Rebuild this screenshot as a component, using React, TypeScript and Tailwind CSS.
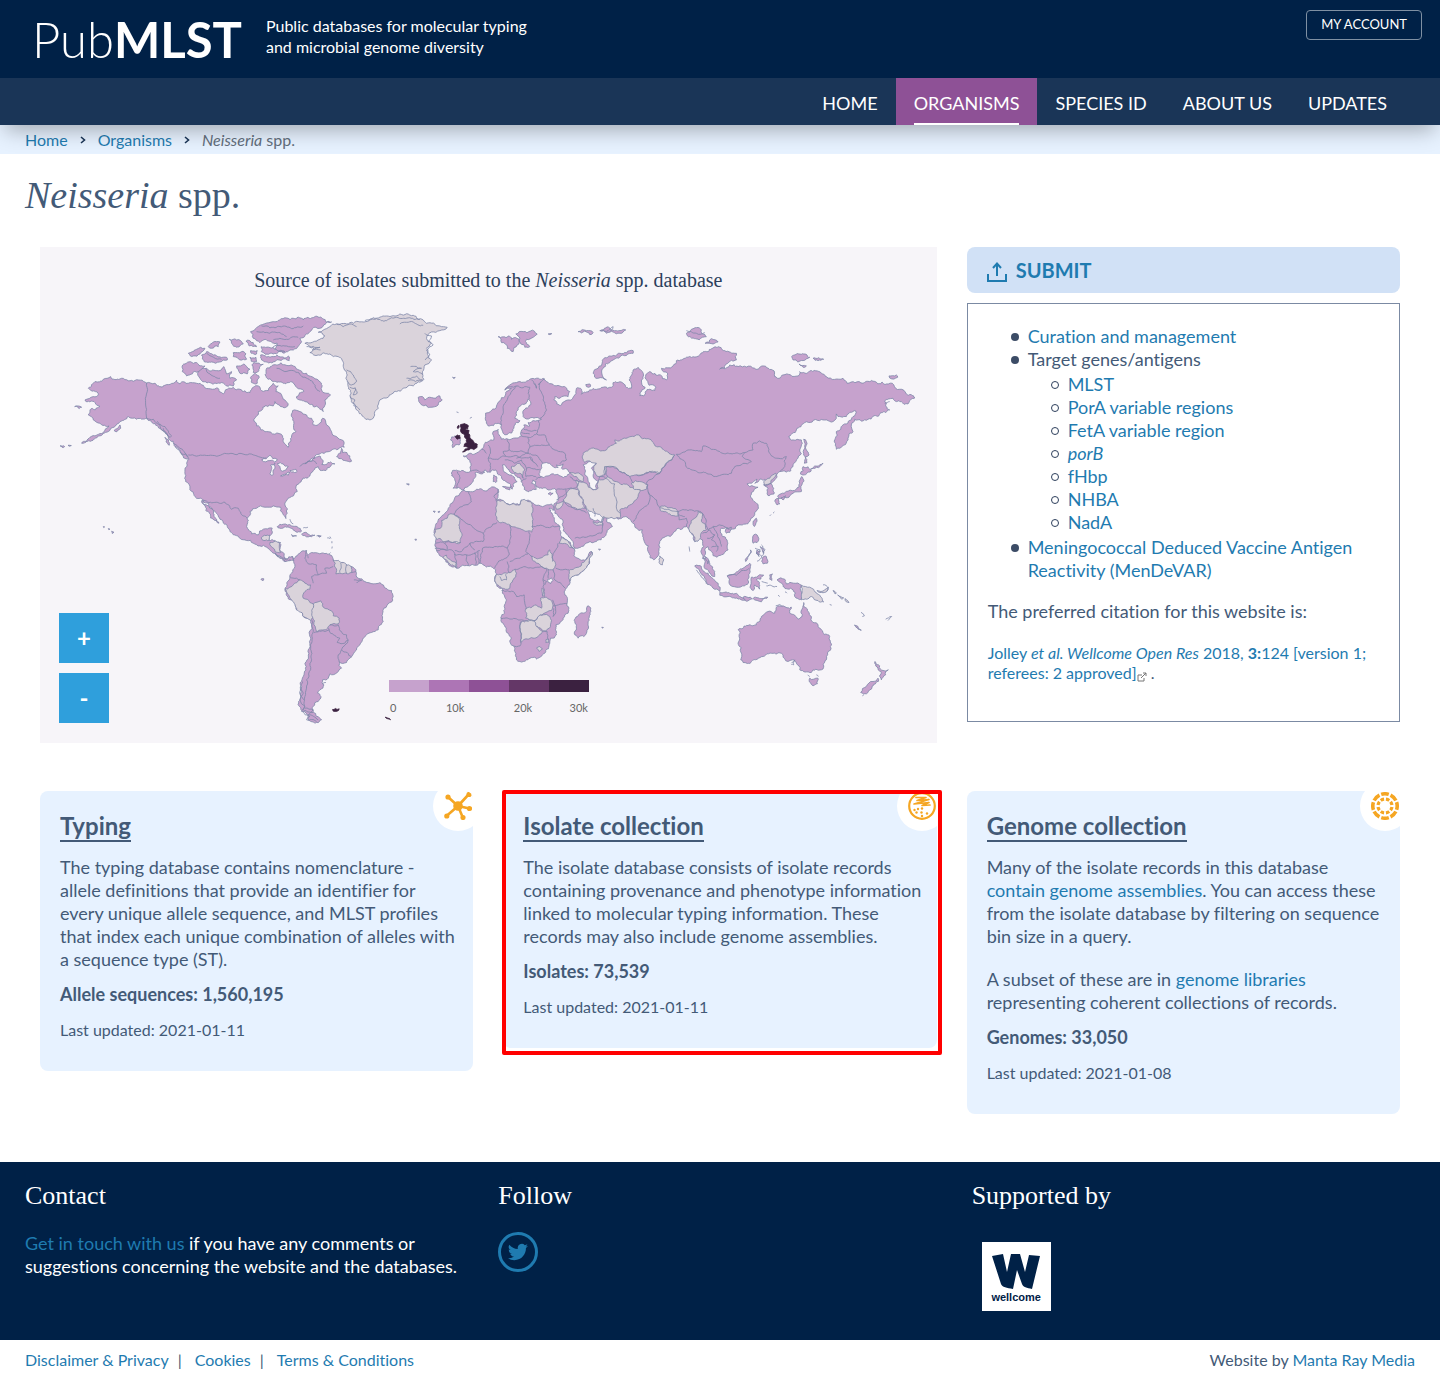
import React from "react";

type Point = [number, number];

const parse = (s: string): Point[] =>
  s.trim().split(/\s+/).map((p) => p.split(",").map(Number) as Point);

const noise = (x: number, y: number) => {
  const v = Math.sin(x * 12.9898 + y * 78.233) * 43758.5453;
  return (v - Math.floor(v)) * 2 - 1;
};

/* Splits an edge at displaced midpoints, so that a coast looks natural. */
function split(a: Point, b: Point, k: number): Point[] {
  const len = Math.hypot(b[0] - a[0], b[1] - a[1]);
  if (len < 7) return [b];
  const mx = (a[0] + b[0]) / 2;
  const my = (a[1] + b[1]) / 2;
  const d = (noise(mx, my) * Math.min(len, 26) * k) / len;
  const sign = a[0] < b[0] ? 1 : -1;
  const m: Point = [mx - (b[1] - a[1]) * d * sign, my + (b[0] - a[0]) * d * sign];
  return [...split(a, m, k), ...split(m, b, k)];
}

function trace(s: string, closed: boolean, k: number) {
  const pts = parse(s);
  const out: Point[] = [pts[0]];
  for (let i = 1; i < pts.length; i++) out.push(...split(pts[i - 1], pts[i], k));
  if (closed) out.push(...split(pts[pts.length - 1], pts[0], k));
  return "M" + out.map((p) => p[0].toFixed(1) + " " + p[1].toFixed(1)).join("L") + (closed ? "Z" : "");
}

interface Region {
  x: number;
  y: number;
  land?: string[];
  water?: string[];
  none?: string[];
  dark?: string[];
  lines?: string[];
}

const regions: Region[] = [
  {
    x: 0,
    y: 53,
    land: [
      "212,230 240,237 280,244 320,249 345,250 352,258 380,254 400,250 410,241 420,252 445,250 470,250 490,256 505,266 530,264 550,282 562,268 580,262 600,268 630,278 640,262 655,258 665,272 685,272 700,250 715,258 708,275 725,285 735,300 745,312 738,322 718,315 705,305 700,318 675,318 655,335 642,358 650,378 680,395 705,403 728,408 730,425 745,442 752,425 755,408 768,395 762,370 755,350 758,332 780,335 800,345 815,355 820,375 835,374 848,355 860,375 875,395 890,410 910,422 913,442 895,448 860,456 830,464 812,478 795,492 815,484 842,470 850,482 846,494 860,494 872,486 885,492 868,503 845,512 835,500 820,512 810,528 785,540 770,555 772,575 755,590 738,605 735,615 742,640 738,656 728,640 722,622 700,618 675,622 650,625 630,635 622,655 620,680 635,702 655,705 670,688 697,685 692,705 688,722 720,728 722,755 735,775 758,770 766,780 752,782 735,785 712,768 695,755 680,742 660,738 640,730 620,722 600,715 570,695 562,680 540,658 522,632 505,610 490,602 465,590 450,565 437,545 435,510 440,490 445,478 425,462 405,440 385,415 365,390 345,370 320,355 290,358 265,350 240,365 222,382 205,395 175,408 125,430 150,412 190,398 207,378 180,370 160,360 145,345 150,330 180,320 165,308 135,300 160,290 175,285 145,265 165,245 190,238",
      "486,602 505,618 520,640 537,670 525,662 508,640 496,618",
      "650,83 700,65 760,55 820,53 875,66 850,78 810,95 780,115 785,125 755,150 720,155 700,150 712,130 660,128 640,115 632,95",
      "662,165 700,170 745,168 748,182 700,186 665,180",
      "475,215 500,205 530,212 552,200 560,222 575,215 570,235 590,240 580,258 540,250 510,248 480,235",
      "435,192 470,188 495,198 475,215 440,228 427,215",
      "680,205 710,195 760,198 800,220 835,240 845,270 872,285 855,300 850,335 820,320 795,305 770,290 792,274 770,262 760,248 730,250 700,245 685,238 675,225",
      "485,165 500,155 520,165 560,172 562,180 515,186 488,178",
      "445,160 470,148 495,145 480,162 460,168",
      "505,140 520,126 540,126 535,140 515,145",
      "568,118 590,120 610,132 600,138 575,130",
      "580,158 605,155 618,162 620,178 600,180 580,170",
      "590,198 612,192 630,208 622,222 600,220",
      "636,195 670,193 655,215 640,218",
      "632,232 645,220 658,232 652,250 635,248",
      "618,124 640,128 650,140 628,138",
      "632,152 652,152 650,162 634,160",
      "630,172 648,172 650,185 634,184",
      "664,140 700,142 735,155 700,162 664,155",
      "890,470 905,445 908,458 930,468 935,484 915,482 905,476",
      "222,392 240,375 242,385 228,396",
      "104,320 125,322 118,326",
      "712,680 730,673 755,678 785,694 768,696 740,682",
      "785,703 800,698 825,706 805,711",
      "60,438 74,440 66,442", "84,436 94,437 88,439",
      "215,694 222,697 217,701", "205,686 210,688 206,689", "190,680 194,681 191,683",
      "375,412 386,420 388,436 378,426",
    ],
    water: [
      "665,480 690,466 712,478 704,486 690,482 678,486",
      "692,496 705,490 700,510 698,526 690,522",
      "712,492 730,492 745,500 738,510 728,514 720,500",
      "722,528 740,520 750,518 745,526", "750,512 768,508 772,514 755,517",
    ],
    none: ["664,714 674,706 690,706 686,722 672,722", "690,728 722,728 722,758 705,755 694,740"],
    lines: [
      "320,249 320,355 340,358 360,375 385,410",
      "445,465 640,465 655,470 680,474", "780,500 800,488 820,482 830,492",
      "486,602 520,608 555,607 575,628 595,625 610,648 622,655",
      "352,364 375,380 395,408 388,412 370,385", "400,430 420,445 440,465 448,478", "405,440 425,462 445,470",
      "665,78 690,84 720,80 755,86 790,78", "650,95 690,100 720,98 740,110", "700,120 740,118 775,112", "700,140 740,138 765,140",
      "710,205 735,215 760,212 790,232 820,250 840,275", "496,205 510,222 540,235", "500,160 545,178",
      "760,672 750,658", "790,684 804,682", "830,708 842,709", "862,714 870,716",
    ],
  },
  {
    x: 600,
    y: 53,
    none: [
      "195,130 240,118 255,108 235,97 250,90 290,72 330,68 370,66 400,53 440,48 480,42 520,46 550,60 560,70 600,78 622,82 600,92 575,96 560,115 575,130 560,145 575,180 555,195 548,215 552,238 520,258 490,265 470,275 445,292 420,300 415,325 405,335 400,355 390,360 370,350 350,330 340,310 330,285 325,260 318,235 322,225 310,195 295,170 270,162 235,165 210,158 222,145",
    ],
    land: [
      "535,292 548,290 555,300 575,293 600,288 607,300 595,315 570,322 545,315 537,305",
      "500,552 508,552 506,556", "638,232 646,232 643,236",
    ],
    lines: [
      "200,140 240,142 220,150 242,150", "290,72 310,80 330,72 350,80", "375,62 410,56 440,62 470,52 540,58", "480,72 520,66 550,76",
      "320,210 340,225 350,245 335,255 322,245", "330,262 348,268 340,285 352,280 345,262", "555,100 575,108 565,125 580,135 560,150 570,165 556,180",
      "512,200 545,205 520,215 550,222", "500,235 530,228 548,240 505,242", "330,290 345,300 342,318 360,330",
    ],
  },
  {
    x: 1140,
    y: 53,
    land: [
      "100,565 105,540 98,512 130,512 152,514 153,490 130,468 150,460 165,462 185,448 205,425 222,420 220,395 235,388 238,405 245,418 265,418 305,408 312,385 312,375 330,378 325,368 340,362 365,358 320,357 310,350 312,330 332,305 325,297 305,315 290,335 285,355 300,362 282,385 262,404 250,400 245,375 235,370 205,378 197,360 197,340 230,318 255,290 275,265 255,270 290,248 330,238 370,235 380,245 420,258 450,275 445,290 405,290 402,300 425,315 445,300 465,285 470,265 485,268 485,283 510,270 550,262 575,262 580,248 610,250 635,265 628,240 640,210 655,202 668,215 665,240 676,262 660,287 672,288 690,268 705,272 708,262 688,256 678,225 690,215 722,225 740,240 744,222 725,205 760,198 770,182 800,172 840,165 865,155 890,142 915,152 950,160 950,180 900,208 930,195 955,200 1005,205 1030,198 1058,210 1065,230 1078,235 1090,225 1135,228 1140,215 1170,213 1205,220 1220,230 1270,235 1282,250 1330,250 1350,245 1400,252 1440,268 1460,282 1486,293 1465,312 1445,305 1420,295 1395,305 1410,330 1360,350 1345,358 1305,358 1295,375 1300,395 1285,415 1260,445 1250,448 1247,415 1250,395 1270,375 1300,350 1308,333 1280,350 1250,342 1240,365 1200,362 1155,368 1130,390 1107,410 1120,420 1145,420 1145,460 1120,500 1100,517 1080,515 1070,525 1065,540 1050,550 1062,565 1063,582 1045,587 1045,565 1032,555 1035,538 1020,538 1005,550 1012,538 982,552 990,560 1015,562 995,578 1010,610 1012,630 990,665 960,675 930,688 905,685 902,695 922,720 925,750 905,765 892,772 875,755 865,740 855,750 850,775 870,790 885,815 885,830 870,820 855,790 845,760 848,720 840,715 825,725 810,695 800,680 775,685 760,700 720,725 718,760 702,780 688,760 672,720 668,690 650,685 640,670 625,655 595,658 565,655 550,638 520,625 498,618 505,635 520,660 545,668 555,645 560,665 578,680 555,710 530,725 465,745 455,720 430,680 405,640 412,605 410,570 385,570 350,562 348,545 340,540 335,550 350,568 335,572 325,576 308,555 305,540 285,520 262,505 248,495 250,505 268,525 292,545 282,550 277,568 268,550 245,530 228,510 212,517 195,510 185,522 165,520 160,545 145,560 128,570",
      "235,110 265,108 275,118 298,118 292,135 280,155 262,145 245,128",
      "288,102 310,95 352,102 340,112 320,118 330,140 315,142 300,115",
      "520,220 535,205 548,185 570,168 600,160 640,152 640,160 600,172 570,188 550,205 548,228 560,240 535,235",
      "475,95 500,92 520,98 510,104", "540,92 570,84 590,92 618,90 600,100 560,100",
      "800,100 815,88 845,90 860,110 838,120 810,110", "856,130 875,116 895,126 880,132", "385,102 396,101 390,104",
      "498,254 510,252 512,260 500,260",
      "92,420 105,408 118,415 118,435 98,443", "222,525 230,530 228,548 220,545", "248,560 275,560 270,570",
      "1116,170 1145,163 1170,172 1150,182 1120,180", "1180,175 1212,178 1195,182", "1408,228 1430,225 1434,232 1410,234", "1138,192 1160,198 1150,202",
      "1152,418 1160,425 1160,450 1168,465 1158,470 1162,488 1154,490 1152,450",
      "1150,500 1175,512 1158,524 1142,522", "1146,530 1152,545 1145,575 1120,580 1110,588 1080,596 1074,590 1105,574 1130,568 1140,550",
      "1066,600 1078,596 1080,612 1072,615", "1098,588 1084,594 1090,600",
      "1000,668 1010,655 1012,665 1004,680", "918,688 935,682 930,698 920,700", "385,582 400,580 392,586",
      "1172,508 1210,490 1190,502",
    ],
    water: [
      "358,525 365,495 385,490 400,500 415,503 410,495 430,492 425,505 450,520 440,530 405,525 385,528 370,533",
      "490,495 510,485 530,490 515,505 520,525 535,545 530,565 510,565 505,545 495,525",
    ],
    none: [
      "490,460 515,445 560,450 590,430 585,420 650,405 690,418 710,440 765,465 740,490 720,520 690,515 650,525 630,530 600,515 580,500 560,500 555,525 535,530 522,512 530,490 510,483 495,488",
      "470,540 500,550 506,562 520,570 535,565 536,542 550,540 565,530 600,550 630,562 660,568 655,590 640,610 600,630 600,655 565,655 545,650 515,635 498,618 490,600 475,570",
      "440,580 458,566 478,572 490,600 498,625 480,628 435,608 430,600", "635,550 660,545 685,555 680,568 640,565",
      "450,518 490,530 490,545 470,530", "275,500 300,490 315,510 310,535 300,520 285,518", "410,610 432,602 425,620 410,628",
      "720,622 735,618 775,635 775,648 750,642 722,632", "810,675 825,655 835,635 848,640 845,660 860,690 845,698 840,718 825,725 810,695",
      "720,768 732,780 728,795 718,788", "1032,545 1050,535 1068,520 1062,535 1050,552 1036,556", "520,665 545,668 553,650 550,676 530,676",
    ],
    dark: [
      "122,374 138,373 146,378 144,386 136,390 148,392 146,400 150,412 158,420 164,430 173,434 172,442 162,449 148,450 136,454 128,456 136,447 146,444 132,440 134,432 142,428 140,418 134,412 132,402 126,400 122,390", "106,410 112,405 120,407 122,415 112,418", "114,378 117,376 115,386 112,384",
    ],
    lines: [
      "255,270 290,258 330,262 325,280 328,297", "345,250 350,265 335,240", "290,258 265,290 250,320 245,375", "365,245 360,270 370,300 380,330 360,355", "375,236 355,255",
      "355,362 358,380 350,402 375,405 388,435 330,442 325,412 350,402", "388,435 435,460 440,480 420,492", "305,408 325,412", "305,398 330,402", "312,388 350,392",
      "262,418 268,450 250,455 260,470 230,478 205,475 212,460 205,435", "268,450 295,455 325,460 330,442", "262,470 300,472 325,460 355,470 368,490", "205,475 212,490 210,515", "255,480 285,490 305,480",
      "305,480 320,505 360,508", "320,505 318,530 350,532", "112,515 118,540 112,565", "153,514 195,518", "330,470 340,485", "348,540 365,530", "305,545 320,535", "185,448 200,460", "290,475 330,472 355,500",
      "450,530 478,545 470,562 410,570", "410,600 440,580 438,568", "435,608 480,628 500,640", "465,715 500,712 545,700 550,670", "525,650 520,625",
      "536,542 540,530 585,552 583,570 590,600 590,625 600,640", "555,525 555,500 580,500 600,515 630,530 640,550", "650,525 690,515 720,520 700,535 680,550", "565,530 555,500",
      "770,463 810,450 845,455 850,438 900,455 960,462 975,458 1000,450 1000,430 1020,423 1040,430 1050,460 1075,475 1100,470 1095,500 1080,515",
      "770,463 795,485 800,502 835,518 895,528 935,520 945,500 995,485 968,470 975,458", "765,465 740,490 720,520",
      "680,550 685,575 710,600 720,622 775,635 815,630 835,633", "685,575 690,600 655,640 640,665", "775,635 778,660 800,655 800,680", "778,645 795,650",
      "835,633 848,640 865,690 900,675 930,688", "848,700 870,690 885,705 875,720 895,740 890,755", "880,680 900,720 905,740", "862,715 885,705", "875,742 895,740",
      "1032,555 1055,550", "1410,305 1395,310", "110,336 116,338", "150,355 156,352", "545,90 565,92 580,80 570,95", "800,92 830,100 855,98",
    ],
  },
  {
    x: 1140,
    y: 593,
    land: [
      "122,38 145,35 170,28 210,25 235,28 235,45 230,60 250,62 270,75 300,75 305,60 335,68 380,75 395,72 400,92 388,85 400,110 420,140 425,170 440,180 455,200 465,210 462,228 490,240 515,215 518,222 505,255 480,280 450,305 437,328 435,345 442,370 445,400 430,415 408,435 410,465 392,475 390,490 375,520 350,538 320,540 300,545 290,540 285,515 272,490 265,460 250,430 243,412 255,385 258,365 248,340 245,325 225,305 230,285 228,270 200,262 180,250 150,258 110,265 85,250 65,230 50,210 45,195 50,170 45,145 60,115 75,100 90,80 100,65",
      "505,378 513,395 505,430 492,470 475,475 465,465 470,445 467,415 490,400",
      "40,94 46,94 44,98", "54,96 60,94 58,98", "546,442 551,443 548,445", "536,208 542,208 540,211",
    ],
    none: [
      "232,62 250,62 270,75 300,75 305,60 335,68 336,157 270,135 235,125 230,95",
      "45,148 62,145 65,122 82,115 85,105 102,103 120,118 122,188 75,185 50,178",
      "515,215 518,222 505,255 480,280 450,305 448,272 480,260 498,240",
      "333,228 360,235 385,225 390,210 397,228 408,255 400,270 380,265 350,250", "418,190 425,172 440,180 465,208 440,192",
      "228,285 260,280 285,268 290,280 280,300 270,325 245,325 225,303", "70,232 80,226 90,238 110,250 110,265 85,248",
      "318,388 345,375 365,385 362,355 380,352 398,370 395,392 370,402 345,422 318,415",
      "342,425 370,405 390,410 392,435 380,452 350,440", "305,425 340,422 350,440 368,455 345,475 325,478 303,488",
      "350,505 360,500 368,507 358,515", "378,480 386,478 386,488 378,488", "366,325 372,330 374,350 368,345",
    ],
    water: ["384,298 395,294 400,302 392,312 384,306"],
    lines: [
      "235,28 222,50 230,65", "145,35 155,65 110,90 102,103", "102,103 190,160 232,128", "190,160 190,185 150,190 125,215 105,212", "122,188 75,190 82,210",
      "270,135 272,175 262,205 230,200 188,205 180,250", "327,155 328,190 318,215 333,228", "336,140 420,140", "262,205 268,225 245,240 225,265", "270,245 300,235 325,222",
      "285,268 320,262 380,266", "262,245 268,280", "380,268 370,295 370,320 368,350", "245,332 280,335 290,350 313,345 318,388", "243,415 305,420 345,422",
      "303,425 301,498 280,498", "408,265 448,270", "400,270 402,295 437,325", "400,378 442,372", "415,190 400,220 398,245", "105,222 108,262", "140,225 145,258", "165,218 168,255", "175,215 178,250",
      "45,205 95,210 105,225 140,225 180,212", "48,190 75,190", "50,212 80,212", "258,283 260,300 245,302 240,290", "370,300 380,305 375,315", "398,360 408,395 400,410 402,385", "368,455 382,455 386,480", "150,190 165,210", "385,268 385,295",
    ],
  },
  {
    x: 1800,
    y: 653,
    land: [
      "295,390 350,375 365,350 385,335 405,340 410,322 430,318 455,322 450,340 475,358 487,350 492,308 505,335 515,350 520,368 545,390 570,410 572,440 560,480 545,510 515,518 480,510 470,490 458,480 445,485 430,465 405,460 370,470 335,485 310,488 303,480 305,460 295,430",
      "510,535 535,535 533,552 520,558 512,548",
      "706,485 720,498 730,512 746,510 738,525 725,540 720,530 724,515", "715,535 716,545 695,568 680,582 663,578 680,560 700,545",
      "165,198 185,200 205,220 235,250 240,275 220,265 195,235 180,215", "240,278 270,280 300,290 330,293 300,297 265,290 240,286",
      "262,228 285,222 310,205 330,190 328,230 315,258 290,262 268,250", "335,232 350,232 372,226 350,240 360,268 345,255 340,272 332,258",
      "412,240 435,238 440,252 462,250 485,256 485,298 465,290 460,270 430,260", "342,105 352,105 352,128 340,130", "368,175 380,170 383,190 370,192", "352,150 362,155 358,170",
      "362,140 370,145 372,160", "340,296 356,294 384,292 365,306", "644,376 655,380 665,391 655,388", "390,225 398,222 396,242 390,238",
      "332,150 322,180 318,185", "196,170 206,180 204,192", "310,292 332,292 338,297 312,297",
    ],
    none: ["485,256 510,262 530,280 548,300 552,306 535,302 515,290 500,298 485,300", "532,272 555,270 566,262 560,276 540,278", "580,272 590,280 586,282", "594,285 612,294 606,298", "616,296 628,308 620,306"],
    lines: [
      "265,228 290,226 305,212 328,205", "550,255 566,264 562,274", "346,145 362,150 350,160 366,168 352,184", "365,135 376,150 368,168", "366,245 384,250", "380,258 412,260",
      "170,210 185,232 200,252", "664,338 674,348 668,350", "738,358 756,350 745,362", "455,490 465,480 462,495 455,494", "408,318 420,314 428,320", "148,140 150,155", "504,525 510,530", "530,525 536,530", "390,48 394,44", "400,40 404,36", "668,588 672,586", "415,286 420,290", "436,276 442,280", "570,314 576,316",
    ],
  },
  {
    x: 630,
    y: 743,
    land: [
      "128,90 150,70 170,62 175,75 185,68 210,72 240,75 250,92 280,98 305,110 318,125 325,145 345,155 370,162 400,165 425,182 430,200 420,218 402,235 398,265 385,300 365,308 340,325 330,345 315,365 300,385 290,398 268,395 275,415 262,428 240,432 235,445 218,450 222,465 210,480 203,490 213,500 205,515 190,530 190,545 215,570 200,578 175,568 158,545 146,515 152,480 160,440 165,400 175,360 180,320 183,272 160,260 140,240 125,210 105,180 110,170 118,150 125,130 135,110",
      "75,70 95,82 110,90 128,80 132,92 118,90 105,95 88,84", "125,14 140,18 128,20", "204,18 214,18 210,22", "33,148 42,147 40,152", "495,28 500,28 498,32",
    ],
    none: [
      "120,172 130,165 150,150 165,160 182,165 180,178 165,185 160,205 180,218 190,222 190,262 183,272 160,260 140,240 125,210 105,178",
      "190,222 213,213 220,232 245,243 250,258 268,265 265,282 240,285 230,298 200,305 192,285 188,262", "250,90 280,98 305,110 305,128 270,130 258,132 255,112",
    ],
    dark: ["248,539 256,536 268,537 266,542 256,545 250,544", "406,562 414,565 422,570 414,567"],
    lines: [
      "170,62 165,85 175,102 200,105 205,135 185,140 190,160", "205,135 230,130 225,115 250,110", "120,140 140,145 150,150", "272,100 270,128", "290,104 290,130",
      "188,272 190,300 185,340 180,400 170,450 165,500 160,540 190,548", "192,308 225,305 238,300", "240,285 265,285 268,300 290,315 295,330 285,340 262,338 270,325 240,308 236,295",
      "268,395 265,375 275,360 305,382", "295,330 275,360", "305,128 318,125", "312,150 335,152 320,158", "152,470 160,490 150,510 165,530 155,545 180,560 170,570 200,575", "158,455 150,485 162,510", "165,535 190,540 175,555 205,570", "240,20 243,26", "246,34 246,40", "247,50 246,56", "242,68 238,72", "218,462 228,458", "170,75 175,85",
    ],
  },
];

function WorldMap() {
  return (
    <svg viewBox="0 0 2691 1488" className="block w-full" role="img" aria-label="World map of isolate sources" strokeLinejoin="round">
      {regions.map((r, i) => (
        <g key={i} transform={`translate(${r.x} ${r.y + 106})`} stroke="#7d87a8" strokeWidth="2.4">
          {r.land?.map((s, k) => <path key={k} d={trace(s, true, 0.24)} fill="#c6a2cd" />)}
          {r.water?.map((s, k) => <path key={k} d={trace(s, true, 0.24)} fill="#f7f5f9" />)}
          {r.none?.map((s, k) => <path key={k} d={trace(s, true, 0.2)} fill="#dad3db" />)}
          {r.dark?.map((s, k) => <path key={k} d={trace(s, true, 0.24)} fill="#3b2140" stroke="#3b2140" />)}
          {r.lines?.map((s, k) => <path key={k} d={trace(s, false, 0.16)} fill="none" />)}
        </g>
      ))}
    </svg>
  );
}

const link = "text-[#1f7bb0] hover:underline";

function NodesIcon() {
  return (
    <svg viewBox="0 0 28 28" className="size-7" stroke="#f5a623" strokeWidth="2.6" strokeLinecap="round" fill="#f5a623">
      <path d="M14 14 4 5M14 14 25 2M14 14 25.500 16.500M14 14 19 26M14 14 2.500 24" />
      <circle cx="14" cy="14" r="3.500" /><circle cx="4" cy="5" r="1.300" /><circle cx="25" cy="2.500" r="1.300" /><circle cx="25.500" cy="16.500" r="1.300" /><circle cx="19" cy="25.500" r="1.300" /><circle cx="2.800" cy="24" r="1.300" />
    </svg>
  );
}

function DishIcon() {
  return (
    <svg viewBox="0 0 28 28" className="size-7" fill="none" stroke="#f5a623">
      <circle cx="14" cy="14" r="12.800" strokeWidth="2.200" />
      <path d="M8 5.500H18L9 8.500 21 7.500 6 12 21 10.500 14 13.500 22 13" strokeWidth="1.700" strokeLinejoin="round" strokeLinecap="round" />
      <g fill="#f5a623" stroke="none"><circle cx="6.500" cy="18" r="1.200" /><circle cx="10" cy="17" r="1.200" /><circle cx="14" cy="16.500" r="1.200" /><circle cx="8.500" cy="20.500" r="1.200" /><circle cx="13.500" cy="20.500" r="1.200" /><circle cx="19" cy="21.500" r="1.200" /><circle cx="14" cy="24" r="1.200" /></g>
    </svg>
  );
}

function RingsIcon() {
  return (
    <svg viewBox="0 0 28 28" className="size-7" fill="none" stroke="#f5a623">
      <circle cx="14" cy="14" r="12.200" strokeWidth="3.600" pathLength="80" strokeDasharray="8 2" strokeDashoffset="-1" transform="rotate(-22.500 14 14)" />
      <circle cx="14" cy="14" r="7" strokeWidth="3.200" pathLength="80" strokeDasharray="6.500 3.500" strokeDashoffset="-1.750" />
    </svg>
  );
}

function Card({ title, icon, marked, children }: { title: string; icon: React.ReactNode; marked?: boolean; children: React.ReactNode }) {
  return (
    <section className="relative">
      <div className="relative overflow-hidden rounded-lg bg-[#e7f2ff] pt-5 pr-3 pb-[30px] pl-5 text-lg leading-[23px] text-[#435a77]">
        <span className="absolute -top-2.5 -right-2.5 flex size-[50px] items-center justify-center rounded-full bg-white">{icon}</span>
        <h2 className="mb-[14px] text-2xl leading-[29px] font-bold">
          <a href="#" className="inline-block border-b-2 border-[#435a77]">{title}</a>
        </h2>
        {children}
      </div>
      {marked && <div className="pointer-events-none absolute -top-px -right-[5px] -bottom-[7px] -left-px rounded-xs border-4 border-[#ff0000]" />}
    </section>
  );
}

function Stats({ label, date }: { label: string; date: string }) {
  return (
    <>
      <p className="mt-3 font-bold">{label}</p>
      <p className="mt-3 text-base leading-[23px]">Last updated: {date}</p>
    </>
  );
}

const nav = ["HOME", "ORGANISMS", "SPECIES ID", "ABOUT US", "UPDATES"];
const serif = "font-['Liberation_Serif',serif]";

export default function App() {
  return (
    <div className="min-w-[1200px] bg-white font-['Lato',sans-serif] text-[#435a77] [font-variant-ligatures:none]">
      <header className="relative z-10 shadow-[0_10px_20px_-5px_rgba(0,0,0,0.3)]">
        <div className="flex h-[78px] items-start bg-[#002147] text-white">
          <a href="#" className="ml-8 pt-[10px] text-[49px] leading-[58px] font-light">Pub<strong className="font-bold">MLST</strong></a>
          <p className="ml-6 pt-[15px] text-base leading-[21px]">Public databases for molecular typing<br />and microbial genome diversity</p>
          <button className="mt-[10px] mr-[18px] ml-auto h-[30px] rounded-[4px] border border-[#7f90a3] px-[14px] text-[13px]">MY ACCOUNT</button>
        </div>
        <nav className="flex h-[47px] justify-end bg-[#1a3557] pr-[35px] text-lg leading-[26px] text-white">
          {nav.map((n) => (
            <a key={n} href="#" className={n === "ORGANISMS" ? "bg-[#8e5196] px-[18px]" : "px-[18px]"}>
              <span className={n === "ORGANISMS" ? "block h-[47px] border-b-2 border-white pt-3" : "block h-[47px] pt-3"}>{n}</span>
            </a>
          ))}
        </nav>
      </header>

      <nav aria-label="Breadcrumb" className="flex h-[29px] items-center gap-[11px] bg-[#e7f2ff] px-[25px] text-base">
        <a href="#" className={link}>Home</a>
        <Chevron />
        <a href="#" className={link}>Organisms</a>
        <Chevron />
        <span className="text-[#626e7c]"><i>Neisseria</i> spp.</span>
      </nav>

      <h1 className={`${serif} px-[25px] pt-[19px] text-[38px] leading-[44px]`}><i>Neisseria</i> spp.</h1>

      <main className="grid grid-cols-3 items-start gap-x-[30px] gap-y-12 px-10 pt-[30px] pb-12">
        <section className="relative col-span-2 bg-[#f7f5f9]">
          <h2 className={`${serif} absolute inset-x-0 top-5 text-center text-xl leading-[26px] text-[#2d3f5c]`}>Source of isolates submitted to the <i>Neisseria</i> spp. database</h2>
          <WorldMap />
          <div className="absolute bottom-5 left-[19px] flex flex-col gap-[10px] text-2xl font-bold text-white">
            <button aria-label="Zoom in" className="size-[50px] bg-[#2f9fdc]">+</button>
            <button aria-label="Zoom out" className="size-[50px] bg-[#2f9fdc]">-</button>
          </div>
          <div className="absolute bottom-7 left-[349px] w-[200px]">
            <div className="flex h-3">
              <span className="flex-1 bg-[#c6a2cd]" /><span className="flex-1 bg-[#ad75b5]" /><span className="flex-1 bg-[#8e5196]" /><span className="flex-1 bg-[#643767]" /><span className="flex-1 bg-[#3b2140]" />
            </div>
            <div className="mt-2 flex justify-between px-px text-[11px] leading-[15px] text-[#666666]">
              <span>0</span><span className="pl-8">10k</span><span className="pl-8">20k</span><span className="pl-5">30k</span>
            </div>
          </div>
        </section>

        <aside>
          <a href="#" className="flex h-[46px] items-center gap-2 rounded-lg bg-[#d1e1f6] px-[19px] text-xl font-bold text-[#1f7bb0]">
            <svg viewBox="0 0 22 22" className="mt-1 size-[22px]" fill="none" stroke="currentColor" strokeWidth="2"><path d="M2 13v7h18v-7M11 15V3M7 7l4-4.500L15 7" /></svg>
            SUBMIT
          </a>
          <div className="mt-[10px] border border-[#7b8aa3] px-5 pt-[21px] pb-[38px] text-lg leading-[23px]">
            <ul>
              <Item><a href="#" className={link}>Curation and management</a></Item>
              <Item>
                Target genes/antigens
                <ul className="py-0.5">
                  {["MLST", "PorA variable regions", "FetA variable region", "porB", "fHbp", "NHBA", "NadA"].map((t) => (
                    <li key={t} className="relative pl-10 leading-[23px] before:absolute before:top-2 before:left-[23px] before:size-2 before:rounded-full before:border before:border-[#2d3f5c]">
                      <a href="#" className={t === "porB" ? "text-[#1f7bb0] italic hover:underline" : link}>{t}</a>
                    </li>
                  ))}
                </ul>
              </Item>
              <Item><a href="#" className={link}>Meningococcal Deduced Vaccine Antigen<br />Reactivity (MenDeVAR)</a></Item>
            </ul>
            <p className="mt-[18px]">The preferred citation for this website is:</p>
            <p className="mt-5 text-base leading-5">
              <a href="#" className={link}>Jolley <i>et al. Wellcome Open Res</i> 2018, <b>3:</b>124 [version 1;<br />referees: 2 approved]<svg viewBox="0 0 10 10" className="mt-1 inline size-[10px]" fill="none" stroke="#777777"><path d="M5 3H1v6h6V6M4 6l5-5M6 1h3v3" /></svg></a> .
            </p>
          </div>
        </aside>

        <Card title="Typing" icon={<NodesIcon />}>
          <p>The typing database contains nomenclature -<br />allele definitions that provide an identifier for<br />every unique allele sequence, and MLST profiles<br />that index each unique combination of alleles with<br />a sequence type (ST).</p>
          <Stats label="Allele sequences: 1,560,195" date="2021-01-11" />
        </Card>
        <Card title="Isolate collection" icon={<DishIcon />} marked>
          <p>The isolate database consists of isolate records<br />containing provenance and phenotype information<br />linked to molecular typing information. These<br />records may also include genome assemblies.</p>
          <Stats label="Isolates: 73,539" date="2021-01-11" />
        </Card>
        <Card title="Genome collection" icon={<RingsIcon />}>
          <p>Many of the isolate records in this database<br /><a href="#" className={link}>contain genome assemblies</a>. You can access these<br />from the isolate database by filtering on sequence<br />bin size in a query.</p>
          <p className="mt-5">A subset of these are in <a href="#" className={link}>genome libraries</a><br />representing coherent collections of records.</p>
          <Stats label="Genomes: 33,050" date="2021-01-08" />
        </Card>
      </main>

      <footer>
        <div className="grid h-[178px] grid-cols-3 gap-x-[30px] bg-[#002147] px-[25px] pt-[18px] text-lg leading-[23px] text-white">
          <section>
            <h2 className={`${serif} text-[26px] leading-8`}>Contact</h2>
            <p className="mt-5"><a href="#" className={link}>Get in touch with us</a> if you have any comments or<br />suggestions concerning the website and the databases.</p>
          </section>
          <section>
            <h2 className={`${serif} text-[26px] leading-8`}>Follow</h2>
            <a href="#" aria-label="Twitter" className="mt-5 flex size-10 items-center justify-center rounded-full border-3 border-[#1f7bb0] text-[#1f7bb0]">
              <svg viewBox="0 0 24 24" className="size-5" fill="currentColor"><path d="M23.950 4.570a10 10 0 0 1-2.820.770 4.960 4.960 0 0 0 2.160-2.720c-.950.550-2 .950-3.130 1.180a4.920 4.920 0 0 0-8.380 4.480C7.690 8.100 4.070 6.130 1.640 3.160a4.920 4.920 0 0 0 1.520 6.570 4.900 4.900 0 0 1-2.230-.610v.060a4.920 4.920 0 0 0 3.950 4.830 5 5 0 0 1-2.210.080 4.940 4.940 0 0 0 4.600 3.420A9.870 9.870 0 0 1 0 19.540a13.990 13.990 0 0 0 7.550 2.210c9.050 0 14-7.500 14-13.980 0-.210 0-.420-.020-.630a9.940 9.940 0 0 0 2.420-2.570z" /></svg>
            </a>
          </section>
          <section>
            <h2 className={`${serif} text-[26px] leading-8`}>Supported by</h2>
            <a href="#" className="mt-[30px] ml-[10px] flex h-[69px] w-[69px] flex-col items-center bg-white pt-3 text-[#002147]">
              <svg viewBox="0 0 48 35" className="h-[35px] w-12" fill="currentColor"><path d="M0 2 11 0l4 18L19 0h9l5 18L37 1l11 1-8 33c-5-1-9-2-10-5l-5-14-4 19c-6-1-11-2-12-5z" /></svg>
              <span className="font-['Liberation_Sans',sans-serif] text-[11px] leading-4 font-bold">wellcome</span>
            </a>
          </section>
        </div>
        <div className="flex h-10 items-center justify-between px-[25px] text-base">
          <p className="flex gap-[9px]"><a href="#" className={link}>Disclaimer &amp; Privacy</a><span>|</span><a href="#" className={`${link} ml-1`}>Cookies</a><span>|</span><a href="#" className={`${link} ml-1`}>Terms &amp; Conditions</a></p>
          <p>Website by <a href="#" className={link}>Manta Ray Media</a></p>
        </div>
      </footer>
    </div>
  );
}

function Chevron() {
  return <svg viewBox="0 0 8 8" className="size-2" fill="none" stroke="#1a3557" strokeWidth="1.600"><path d="M2 1l3.500 3L2 7" /></svg>;
}

function Item({ children }: { children: React.ReactNode }) {
  return <li className="relative pl-10 before:absolute before:top-2 before:left-[23px] before:size-2 before:rounded-full before:bg-[#3c4c66]">{children}</li>;
}
